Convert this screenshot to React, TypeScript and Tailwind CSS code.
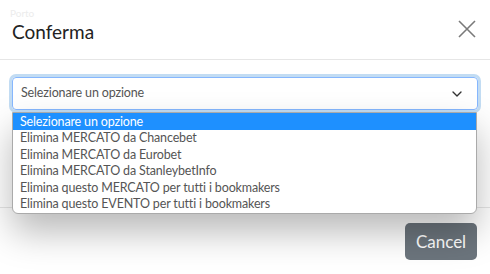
import { ChevronDown } from 'lucide-react';

const options = [
  'Selezionare un opzione',
  'Elimina MERCATO da Chancebet',
  'Elimina MERCATO da Eurobet',
  'Elimina MERCATO da StanleybetInfo',
  'Elimina questo MERCATO per tutti i bookmakers',
  'Elimina questo EVENTO per tutti i bookmakers',
];

function App() {
  return (
    <div className="relative w-[490px] h-[274px] overflow-hidden bg-white font-['Lato',sans-serif]">
      {/* faded page text behind the modal */}
      <span className="absolute left-[10px] top-[8px] text-[10px] leading-none text-[#ececec]">Porto</span>

      {/* header */}
      <div className="h-[60px] flex items-center justify-between pl-3 pr-[12px] border-b border-[#e6e6e6]">
        <h2 className="text-[19px] text-[#222] leading-none pt-[3px]">Conferma</h2>
        <button className="text-[#7a7a7a] pb-[2px]">
          <svg width="22" height="22" viewBox="0 0 22 22" fill="none" stroke="currentColor" strokeWidth="1.6">
            <path d="M3 3L19 19M19 3L3 19" />
          </svg>
        </button>
      </div>

      {/* body */}
      <div className="relative h-[147px] px-3 pt-[17px]">
        <div className="h-[33px] rounded-[4px] border border-[#86b7fe] ring-[3px] ring-[#c2dcf3] flex items-center justify-between pl-[8px] pr-[12px]">
          <span className="text-[12.5px] tracking-[-0.15px] text-[#555]">Selezionare un opzione</span>
          <ChevronDown size={16} strokeWidth={2} className="text-[#333]" />
        </div>

        {/* native select popup */}
        <ul className="absolute left-3 top-[52px] w-[465px] bg-white border border-[#aaa] rounded-b-[6px] overflow-hidden shadow-[0_18px_36px_rgba(0,0,0,0.28)] z-10">
          {options.map((o, i) => (
            <li
              key={o}
              className={
                i === 0
                  ? 'h-[17px] leading-[17px] pl-[7px] text-[12.5px] tracking-[-0.15px] bg-[#1e90ff] text-white'
                  : 'h-[16.5px] leading-[16.5px] pl-[7px] text-[12.5px] tracking-[-0.15px] text-[#555]'
              }
            >
              {o}
            </li>
          ))}
        </ul>
      </div>

      {/* footer */}
      <div className="border-t border-[#e6e6e6] flex justify-end pt-[15px] pr-[13px]">
        <button className="h-[37px] w-[72px] rounded-[5px] bg-[#6c757d] text-white text-[17px]">Cancel</button>
      </div>
    </div>
  );
}

export default App;
